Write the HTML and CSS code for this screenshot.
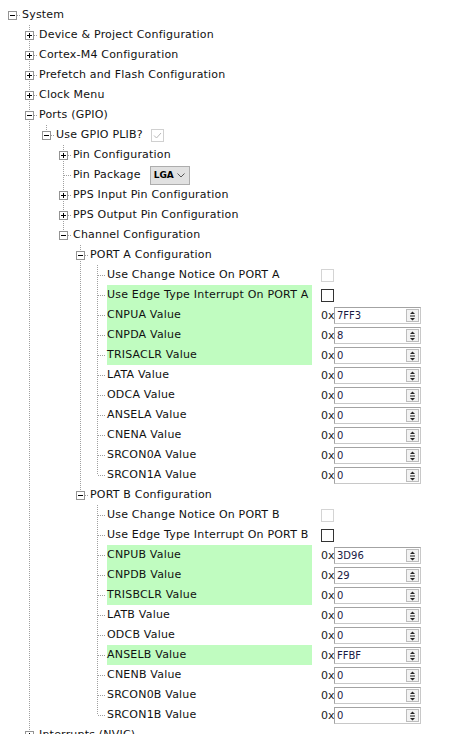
FILE: index.html
```html
<!DOCTYPE html>
<html>
<head>
<meta charset="utf-8">
<link rel="stylesheet" href="styles.css">
</head>
<body>
<div class="tree">
  <div class="node">
    <div class="row"><svg class="exp" width="9" height="9"><rect x=".5" y=".5" width="8" height="8" fill="#fff" stroke="#949494"/><path d="M2 4.5h5" stroke="#000"/></svg><span class="lbl">System</span></div>
    <div class="kids">
      <div class="node"><div class="row"><svg class="exp" width="9" height="9"><rect x=".5" y=".5" width="8" height="8" fill="#fff" stroke="#949494"/><path d="M2 4.5h5M4.5 2v5" stroke="#000"/></svg><span class="lbl">Device &amp; Project Configuration</span></div></div>
      <div class="node"><div class="row"><svg class="exp" width="9" height="9"><rect x=".5" y=".5" width="8" height="8" fill="#fff" stroke="#949494"/><path d="M2 4.5h5M4.5 2v5" stroke="#000"/></svg><span class="lbl">Cortex-M4 Configuration</span></div></div>
      <div class="node"><div class="row"><svg class="exp" width="9" height="9"><rect x=".5" y=".5" width="8" height="8" fill="#fff" stroke="#949494"/><path d="M2 4.5h5M4.5 2v5" stroke="#000"/></svg><span class="lbl">Prefetch and Flash Configuration</span></div></div>
      <div class="node"><div class="row"><svg class="exp" width="9" height="9"><rect x=".5" y=".5" width="8" height="8" fill="#fff" stroke="#949494"/><path d="M2 4.5h5M4.5 2v5" stroke="#000"/></svg><span class="lbl">Clock Menu</span></div></div>
      <div class="node">
        <div class="row"><svg class="exp" width="9" height="9"><rect x=".5" y=".5" width="8" height="8" fill="#fff" stroke="#949494"/><path d="M2 4.5h5" stroke="#000"/></svg><span class="lbl">Ports (GPIO)</span></div>
        <div class="kids">
          <div class="node">
            <div class="row"><svg class="exp" width="9" height="9"><rect x=".5" y=".5" width="8" height="8" fill="#fff" stroke="#949494"/><path d="M2 4.5h5" stroke="#000"/></svg><span class="lbl">Use GPIO PLIB?</span><svg class="cbx gap8" width="13" height="13"><rect x=".5" y=".5" width="12" height="12" fill="#fff" stroke="#d0d0d0"/><path d="M3 6.5l2.5 2.5 4.5-5" fill="none" stroke="#b8b8b8" stroke-width="1"/></svg></div>
            <div class="kids">
              <div class="node"><div class="row"><svg class="exp" width="9" height="9"><rect x=".5" y=".5" width="8" height="8" fill="#fff" stroke="#949494"/><path d="M2 4.5h5M4.5 2v5" stroke="#000"/></svg><span class="lbl">Pin Configuration</span></div></div>
              <div class="node"><div class="row"><span class="sp"></span><span class="lbl">Pin Package</span><span class="combo"><span class="ctext">LGA</span><svg class="chev" width="8" height="5"><path d="M.5 .5l3.5 3.5 3.5-3.5" fill="none" stroke="#555"/></svg></span></div></div>
              <div class="node"><div class="row"><svg class="exp" width="9" height="9"><rect x=".5" y=".5" width="8" height="8" fill="#fff" stroke="#949494"/><path d="M2 4.5h5M4.5 2v5" stroke="#000"/></svg><span class="lbl">PPS Input Pin Configuration</span></div></div>
              <div class="node"><div class="row"><svg class="exp" width="9" height="9"><rect x=".5" y=".5" width="8" height="8" fill="#fff" stroke="#949494"/><path d="M2 4.5h5M4.5 2v5" stroke="#000"/></svg><span class="lbl">PPS Output Pin Configuration</span></div></div>
              <div class="node">
                <div class="row"><svg class="exp" width="9" height="9"><rect x=".5" y=".5" width="8" height="8" fill="#fff" stroke="#949494"/><path d="M2 4.5h5" stroke="#000"/></svg><span class="lbl">Channel Configuration</span></div>
                <div class="kids">
                  <div class="node">
                    <div class="row"><svg class="exp" width="9" height="9"><rect x=".5" y=".5" width="8" height="8" fill="#fff" stroke="#949494"/><path d="M2 4.5h5" stroke="#000"/></svg><span class="lbl">PORT A Configuration</span></div>
                    <div class="kids">
                      <div class="node"><div class="row"><span class="sp"></span><span class="lbl fixed">Use Change Notice On PORT A</span><span class="cb dis"></span></div></div>
                      <div class="node"><div class="row"><span class="sp"></span><span class="lbl fixed hl">Use Edge Type Interrupt On PORT A</span><span class="cb"></span></div></div>
                      <div class="node"><div class="row"><span class="sp"></span><span class="lbl fixed hl">CNPUA Value</span><span class="val"><span class="hex">0x</span><span class="inp"><span class="v">7FF3</span><svg class="spin" width="13" height="13"><rect x=".5" y=".5" width="12" height="12" fill="#f2f2f2" stroke="#bdbdbd"/><path d="M4 5h5L6.5 2.5zM4 9h5l-2.5 2.5z" fill="#222"/><path d="M4 7h5" stroke="#222"/></svg></span></span></div></div>
                      <div class="node"><div class="row"><span class="sp"></span><span class="lbl fixed hl">CNPDA Value</span><span class="val"><span class="hex">0x</span><span class="inp"><span class="v">8</span><svg class="spin" width="13" height="13"><rect x=".5" y=".5" width="12" height="12" fill="#f2f2f2" stroke="#bdbdbd"/><path d="M4 5h5L6.5 2.5zM4 9h5l-2.5 2.5z" fill="#222"/><path d="M4 7h5" stroke="#222"/></svg></span></span></div></div>
                      <div class="node"><div class="row"><span class="sp"></span><span class="lbl fixed hl">TRISACLR Value</span><span class="val"><span class="hex">0x</span><span class="inp"><span class="v">0</span><svg class="spin" width="13" height="13"><rect x=".5" y=".5" width="12" height="12" fill="#f2f2f2" stroke="#bdbdbd"/><path d="M4 5h5L6.5 2.5zM4 9h5l-2.5 2.5z" fill="#222"/><path d="M4 7h5" stroke="#222"/></svg></span></span></div></div>
                      <div class="node"><div class="row"><span class="sp"></span><span class="lbl fixed">LATA Value</span><span class="val"><span class="hex">0x</span><span class="inp"><span class="v">0</span><svg class="spin" width="13" height="13"><rect x=".5" y=".5" width="12" height="12" fill="#f2f2f2" stroke="#bdbdbd"/><path d="M4 5h5L6.5 2.5zM4 9h5l-2.5 2.5z" fill="#222"/><path d="M4 7h5" stroke="#222"/></svg></span></span></div></div>
                      <div class="node"><div class="row"><span class="sp"></span><span class="lbl fixed">ODCA Value</span><span class="val"><span class="hex">0x</span><span class="inp"><span class="v">0</span><svg class="spin" width="13" height="13"><rect x=".5" y=".5" width="12" height="12" fill="#f2f2f2" stroke="#bdbdbd"/><path d="M4 5h5L6.5 2.5zM4 9h5l-2.5 2.5z" fill="#222"/><path d="M4 7h5" stroke="#222"/></svg></span></span></div></div>
                      <div class="node"><div class="row"><span class="sp"></span><span class="lbl fixed">ANSELA Value</span><span class="val"><span class="hex">0x</span><span class="inp"><span class="v">0</span><svg class="spin" width="13" height="13"><rect x=".5" y=".5" width="12" height="12" fill="#f2f2f2" stroke="#bdbdbd"/><path d="M4 5h5L6.5 2.5zM4 9h5l-2.5 2.5z" fill="#222"/><path d="M4 7h5" stroke="#222"/></svg></span></span></div></div>
                      <div class="node"><div class="row"><span class="sp"></span><span class="lbl fixed">CNENA Value</span><span class="val"><span class="hex">0x</span><span class="inp"><span class="v">0</span><svg class="spin" width="13" height="13"><rect x=".5" y=".5" width="12" height="12" fill="#f2f2f2" stroke="#bdbdbd"/><path d="M4 5h5L6.5 2.5zM4 9h5l-2.5 2.5z" fill="#222"/><path d="M4 7h5" stroke="#222"/></svg></span></span></div></div>
                      <div class="node"><div class="row"><span class="sp"></span><span class="lbl fixed">SRCON0A Value</span><span class="val"><span class="hex">0x</span><span class="inp"><span class="v">0</span><svg class="spin" width="13" height="13"><rect x=".5" y=".5" width="12" height="12" fill="#f2f2f2" stroke="#bdbdbd"/><path d="M4 5h5L6.5 2.5zM4 9h5l-2.5 2.5z" fill="#222"/><path d="M4 7h5" stroke="#222"/></svg></span></span></div></div>
                      <div class="node"><div class="row"><span class="sp"></span><span class="lbl fixed">SRCON1A Value</span><span class="val"><span class="hex">0x</span><span class="inp"><span class="v">0</span><svg class="spin" width="13" height="13"><rect x=".5" y=".5" width="12" height="12" fill="#f2f2f2" stroke="#bdbdbd"/><path d="M4 5h5L6.5 2.5zM4 9h5l-2.5 2.5z" fill="#222"/><path d="M4 7h5" stroke="#222"/></svg></span></span></div></div>
                    </div>
                  </div>
                  <div class="node">
                    <div class="row"><svg class="exp" width="9" height="9"><rect x=".5" y=".5" width="8" height="8" fill="#fff" stroke="#949494"/><path d="M2 4.5h5" stroke="#000"/></svg><span class="lbl">PORT B Configuration</span></div>
                    <div class="kids">
                      <div class="node"><div class="row"><span class="sp"></span><span class="lbl fixed">Use Change Notice On PORT B</span><span class="cb dis"></span></div></div>
                      <div class="node"><div class="row"><span class="sp"></span><span class="lbl fixed">Use Edge Type Interrupt On PORT B</span><span class="cb"></span></div></div>
                      <div class="node"><div class="row"><span class="sp"></span><span class="lbl fixed hl">CNPUB Value</span><span class="val"><span class="hex">0x</span><span class="inp"><span class="v">3D96</span><svg class="spin" width="13" height="13"><rect x=".5" y=".5" width="12" height="12" fill="#f2f2f2" stroke="#bdbdbd"/><path d="M4 5h5L6.5 2.5zM4 9h5l-2.5 2.5z" fill="#222"/><path d="M4 7h5" stroke="#222"/></svg></span></span></div></div>
                      <div class="node"><div class="row"><span class="sp"></span><span class="lbl fixed hl">CNPDB Value</span><span class="val"><span class="hex">0x</span><span class="inp"><span class="v">29</span><svg class="spin" width="13" height="13"><rect x=".5" y=".5" width="12" height="12" fill="#f2f2f2" stroke="#bdbdbd"/><path d="M4 5h5L6.5 2.5zM4 9h5l-2.5 2.5z" fill="#222"/><path d="M4 7h5" stroke="#222"/></svg></span></span></div></div>
                      <div class="node"><div class="row"><span class="sp"></span><span class="lbl fixed hl">TRISBCLR Value</span><span class="val"><span class="hex">0x</span><span class="inp"><span class="v">0</span><svg class="spin" width="13" height="13"><rect x=".5" y=".5" width="12" height="12" fill="#f2f2f2" stroke="#bdbdbd"/><path d="M4 5h5L6.5 2.5zM4 9h5l-2.5 2.5z" fill="#222"/><path d="M4 7h5" stroke="#222"/></svg></span></span></div></div>
                      <div class="node"><div class="row"><span class="sp"></span><span class="lbl fixed">LATB Value</span><span class="val"><span class="hex">0x</span><span class="inp"><span class="v">0</span><svg class="spin" width="13" height="13"><rect x=".5" y=".5" width="12" height="12" fill="#f2f2f2" stroke="#bdbdbd"/><path d="M4 5h5L6.5 2.5zM4 9h5l-2.5 2.5z" fill="#222"/><path d="M4 7h5" stroke="#222"/></svg></span></span></div></div>
                      <div class="node"><div class="row"><span class="sp"></span><span class="lbl fixed">ODCB Value</span><span class="val"><span class="hex">0x</span><span class="inp"><span class="v">0</span><svg class="spin" width="13" height="13"><rect x=".5" y=".5" width="12" height="12" fill="#f2f2f2" stroke="#bdbdbd"/><path d="M4 5h5L6.5 2.5zM4 9h5l-2.5 2.5z" fill="#222"/><path d="M4 7h5" stroke="#222"/></svg></span></span></div></div>
                      <div class="node"><div class="row"><span class="sp"></span><span class="lbl fixed hl">ANSELB Value</span><span class="val"><span class="hex">0x</span><span class="inp"><span class="v">FFBF</span><svg class="spin" width="13" height="13"><rect x=".5" y=".5" width="12" height="12" fill="#f2f2f2" stroke="#bdbdbd"/><path d="M4 5h5L6.5 2.5zM4 9h5l-2.5 2.5z" fill="#222"/><path d="M4 7h5" stroke="#222"/></svg></span></span></div></div>
                      <div class="node"><div class="row"><span class="sp"></span><span class="lbl fixed">CNENB Value</span><span class="val"><span class="hex">0x</span><span class="inp"><span class="v">0</span><svg class="spin" width="13" height="13"><rect x=".5" y=".5" width="12" height="12" fill="#f2f2f2" stroke="#bdbdbd"/><path d="M4 5h5L6.5 2.5zM4 9h5l-2.5 2.5z" fill="#222"/><path d="M4 7h5" stroke="#222"/></svg></span></span></div></div>
                      <div class="node"><div class="row"><span class="sp"></span><span class="lbl fixed">SRCON0B Value</span><span class="val"><span class="hex">0x</span><span class="inp"><span class="v">0</span><svg class="spin" width="13" height="13"><rect x=".5" y=".5" width="12" height="12" fill="#f2f2f2" stroke="#bdbdbd"/><path d="M4 5h5L6.5 2.5zM4 9h5l-2.5 2.5z" fill="#222"/><path d="M4 7h5" stroke="#222"/></svg></span></span></div></div>
                      <div class="node"><div class="row"><span class="sp"></span><span class="lbl fixed">SRCON1B Value</span><span class="val"><span class="hex">0x</span><span class="inp"><span class="v">0</span><svg class="spin" width="13" height="13"><rect x=".5" y=".5" width="12" height="12" fill="#f2f2f2" stroke="#bdbdbd"/><path d="M4 5h5L6.5 2.5zM4 9h5l-2.5 2.5z" fill="#222"/><path d="M4 7h5" stroke="#222"/></svg></span></span></div></div>
                    </div>
                  </div>
                </div>
              </div>
            </div>
          </div>
        </div>
      </div>
      <div class="node"><div class="row"><svg class="exp" width="9" height="9"><rect x=".5" y=".5" width="8" height="8" fill="#fff" stroke="#949494"/><path d="M2 4.5h5M4.5 2v5" stroke="#000"/></svg><span class="lbl">Interrupts (NVIC)</span></div></div>
    </div>
  </div>
</div>
</body>
</html>
```
FILE: styles.css
```css
html, body {
  margin: 0;
  height: 100%;
  overflow: hidden;
  background: #fff;
}

.tree {
  box-sizing: border-box;
  height: 734px;
  overflow: hidden;
  padding: 5px 0 0 8px;
  font-family: "DejaVu Sans", Verdana, sans-serif;
  font-size: 11px;
  color: #000;
}

.node {
  position: relative;
}

.kids {
  padding-left: 17px;
}

.kids > .node::before {
  content: "";
  position: absolute;
  left: 4px;
  top: 0;
  bottom: 0;
  width: 1px;
  background-image: linear-gradient(#a0a0a0 50%, transparent 50%);
  background-size: 1px 2px;
}

.kids > .node:last-child::before {
  bottom: auto;
  height: 10px;
}

.row {
  position: relative;
  display: flex;
  align-items: center;
  height: 20px;
  white-space: nowrap;
}

.row::before {
  content: "";
  position: absolute;
  left: 5px;
  top: 10px;
  width: 8px;
  height: 1px;
  background-image: linear-gradient(to right, #a0a0a0 50%, transparent 50%);
  background-size: 2px 1px;
}

.exp {
  display: block;
  flex: none;
  position: relative;
  z-index: 1;
  margin-right: 5px;
}

.sp {
  flex: none;
  width: 9px;
  margin-right: 5px;
}

.lbl {
  line-height: 20px;
  height: 20px;
  letter-spacing: 0.2px;
  color: #111;
}

.fixed {
  flex: none;
  width: 205px;
}

.hl {
  background: #c0fcc0;
}

.gap8 {
  margin-left: 8px;
}

.cbx {
  display: block;
  flex: none;
}

.cb {
  flex: none;
  width: 13px;
  height: 13px;
  box-sizing: border-box;
  border: 1px solid #333;
  background: #fff;
  margin-left: 9px;
}

.cb.dis {
  border-color: #d4d4d4;
}

.combo {
  display: flex;
  align-items: center;
  box-sizing: border-box;
  width: 40px;
  height: 19px;
  margin-left: 9px;
  padding-left: 3px;
  border: 1px solid #adadad;
  background: #e1e1e1;
}

.ctext {
  font-size: 9px;
  font-weight: bold;
}

.chev {
  display: block;
  margin-left: auto;
  margin-right: 4px;
}

.val {
  display: flex;
  align-items: center;
  margin-left: 9px;
}

.hex {
  width: 13px;
  color: #222;
}

.inp {
  display: flex;
  align-items: center;
  box-sizing: border-box;
  width: 87px;
  height: 17px;
  padding-left: 2px;
  border: 1px solid;
  border-color: #a3a3a3 #c8c8c8 #c8c8c8 #a3a3a3;
  background: #fff;
  font-size: 10px;
  color: #1a1a44;
}

.spin {
  display: block;
  margin-left: auto;
  margin-right: 1px;
}
```
